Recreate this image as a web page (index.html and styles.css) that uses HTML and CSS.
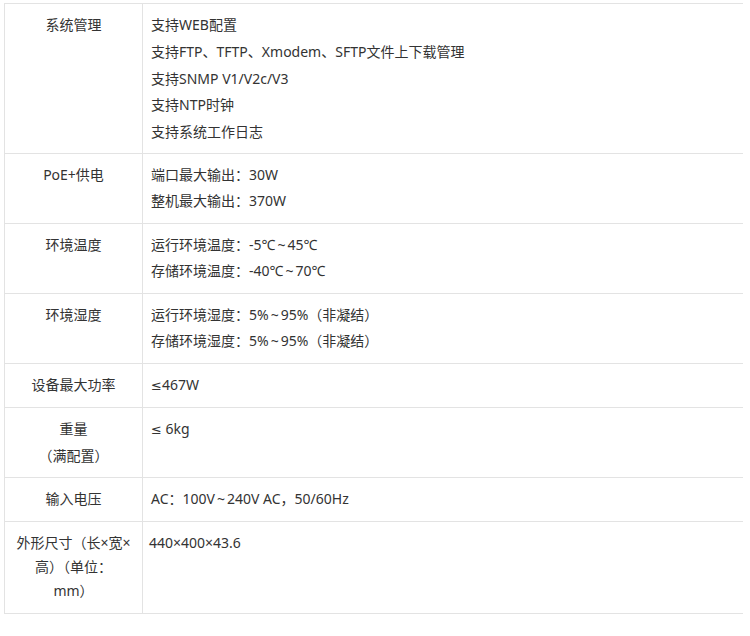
FILE: index.html
```html
<!DOCTYPE html>
<html lang="zh-CN">
<head>
<meta charset="utf-8">
<title>规格参数</title>
<link rel="stylesheet" href="styles.css">
</head>
<body>
<table class="spec">
  <tbody>
    <tr>
      <td class="name"><p>系统管理</p></td>
      <td class="value">
        <p>支持WEB配置</p>
        <p>支持FTP<span class="sc">、</span>TFTP<span class="sc">、</span>Xmodem<span class="sc">、</span>SFTP文件上下载管理</p>
        <p>支持SNMP V1/V2c/V3</p>
        <p>支持NTP时钟</p>
        <p>支持系统工作日志</p>
      </td>
    </tr>
    <tr>
      <td class="name"><p>PoE+供电</p></td>
      <td class="value">
        <p>端口最大输出：30W</p>
        <p>整机最大输出：370W</p>
      </td>
    </tr>
    <tr>
      <td class="name"><p>环境温度</p></td>
      <td class="value">
        <p>运行环境温度：-5℃<span class="tilde">~</span>45℃</p>
        <p>存储环境温度：-40℃<span class="tilde">~</span>70℃</p>
      </td>
    </tr>
    <tr>
      <td class="name"><p>环境湿度</p></td>
      <td class="value">
        <p>运行环境湿度：5%<span class="tilde">~</span>95%（非凝结）</p>
        <p>存储环境湿度：5%<span class="tilde">~</span>95%（非凝结）</p>
      </td>
    </tr>
    <tr>
      <td class="name"><p>设备最大功率</p></td>
      <td class="value"><p><span class="sym">≤</span>467W</p></td>
    </tr>
    <tr>
      <td class="name"><p>重量</p><p>（满配置）</p></td>
      <td class="value"><p><span class="sym">≤</span> 6kg</p></td>
    </tr>
    <tr>
      <td class="name"><p>输入电压</p></td>
      <td class="value"><p>AC：100V<span class="tilde">~</span>240V AC，50/60Hz</p></td>
    </tr>
    <tr>
      <td class="name wrap"><p>外形尺寸（长×宽×<br>高）（单位：<br>mm）</p></td>
      <td class="value tight"><p>440×400×43.6</p></td>
    </tr>
  </tbody>
</table>
</body>
</html>
```
FILE: styles.css
```css
html, body {
  margin: 0;
  padding: 0;
  background: #ffffff;
}

body {
  padding: 3px 0 0 4px;
  font-family: "Noto Sans", "Noto Sans CJK TC", sans-serif;
  font-size: 14px;
  color: #333333;
}

.spec {
  border-collapse: collapse;
  width: 739px;
  table-layout: fixed;
  border-top: 1px solid #e3e3e3;
  border-left: 1px solid #e3e3e3;
}

.spec td {
  border-bottom: 1px solid #e3e3e3;
  vertical-align: top;
  padding: 9px 8px 9.5px;
  line-height: 24px;
}

.spec td p {
  margin: 0;
}

.spec td p + p {
  margin-top: 2.4px;
}

.spec .name {
  width: 121px;
  text-align: center;
  border-right: 1px solid #e3e3e3;
}

.spec .name.wrap {
  padding-bottom: 10px;
}

.spec .value {
  text-align: left;
}

.spec .value.tight {
  padding-left: 6px;
}

.tilde {
  margin: 0 2px;
}

.sc {
  font-family: "Noto Sans CJK SC", sans-serif;
}

.sym {
  font-family: "DejaVu Sans", sans-serif;
  font-size: 13px;
}
```
